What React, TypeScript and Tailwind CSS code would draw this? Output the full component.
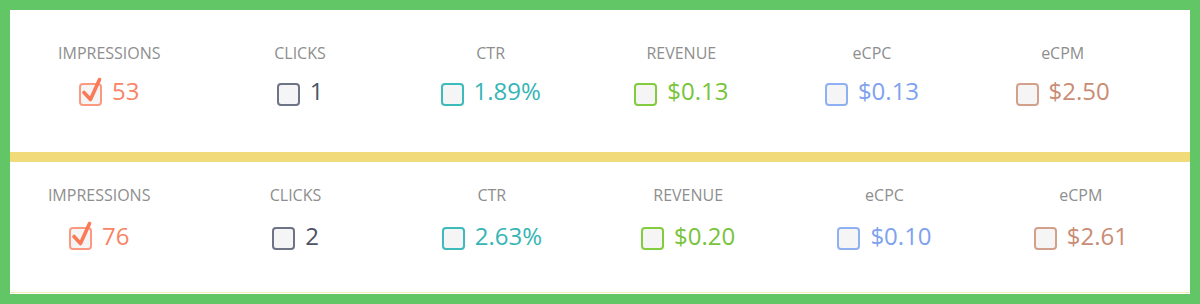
import React from "react";

type Metric = {
  label: string;
  value: string;
  text: string;
  border: string;
  checked?: boolean;
};

const top: Metric[] = [
  { label: "IMPRESSIONS", value: "53", text: "text-[#fa8466]", border: "border-[#fb9a80]", checked: true },
  { label: "CLICKS", value: "1", text: "text-[#4d5466]", border: "border-[#6e7385]" },
  { label: "CTR", value: "1.89%", text: "text-[#35b5b5]", border: "border-[#3dbaba]" },
  { label: "REVENUE", value: "$0.13", text: "text-[#78c43a]", border: "border-[#82cc40]" },
  { label: "eCPC", value: "$0.13", text: "text-[#7ea2ef]", border: "border-[#8fb0f2]" },
  { label: "eCPM", value: "$2.50", text: "text-[#c98c74]", border: "border-[#d3a08b]" },
];

const bottom: Metric[] = [
  { label: "IMPRESSIONS", value: "76", text: "text-[#fa8466]", border: "border-[#fb9a80]", checked: true },
  { label: "CLICKS", value: "2", text: "text-[#4d5466]", border: "border-[#6e7385]" },
  { label: "CTR", value: "2.63%", text: "text-[#35b5b5]", border: "border-[#3dbaba]" },
  { label: "REVENUE", value: "$0.20", text: "text-[#78c43a]", border: "border-[#82cc40]" },
  { label: "eCPC", value: "$0.10", text: "text-[#7ea2ef]", border: "border-[#8fb0f2]" },
  { label: "eCPM", value: "$2.61", text: "text-[#c98c74]", border: "border-[#d3a08b]" },
];

function Box({ m, mt }: { m: Metric; mt: string }) {
  return (
    <div className={`relative w-[23px] h-[23px] rounded-[4px] border-2 bg-[#f5f5f5] ${m.border} ${mt} shrink-0`}>
      {m.checked && (
        <svg
          className="absolute left-[-2px] top-[-2px] overflow-visible"
          width="23"
          height="23"
          viewBox="0 0 23 23"
        >
          <path
            d="M5 9.5 L11.5 16.5 L20.5 -3.5"
            fill="none"
            stroke="#fa7a58"
            strokeWidth="3.6"
            strokeLinecap="round"
            strokeLinejoin="round"
          />
        </svg>
      )}
    </div>
  );
}

function Row({
  items,
  gridCls,
  valueGap,
  boxMt,
}: {
  items: Metric[];
  gridCls: string;
  valueGap: string;
  boxMt: string;
}) {
  return (
    <div className={`grid grid-cols-6 ${gridCls}`}>
      {items.map((m) => (
        <div key={m.label} className="flex flex-col items-center">
          <div className="text-[16px] leading-[22px] text-[#8e8e8e]">{m.label}</div>
          <div className={`flex items-start gap-[10px] ${valueGap}`}>
            <Box m={m} mt={boxMt} />
            <span className={`text-[24px] leading-[32px] ${m.text}`}>{m.value}</span>
          </div>
        </div>
      ))}
    </div>
  );
}

export default function App() {
  return (
    <div
      className="w-[1200px] h-[304px] bg-[#62c667] p-[10px] pb-[10px]"
      style={{ fontFamily: '"Open Sans", "Noto Sans", sans-serif' }}
    >
      <div className="bg-white h-[284px] flex flex-col">
        <div className="h-[142px] pt-[32px]">
          <Row items={top} gridCls="ml-[4px] w-[1144px]" valueGap="mt-[11px]" boxMt="mt-[8px]" />
        </div>
        <div className="h-[10px] bg-[#f0da7a]" />
        <div className="h-[131px] pt-[22px] border-b border-[#f7ebb8]">
          <Row items={bottom} gridCls="ml-[-9px] w-[1178px]" valueGap="mt-[14px]" boxMt="mt-[7px]" />
        </div>
      </div>
    </div>
  );
}
